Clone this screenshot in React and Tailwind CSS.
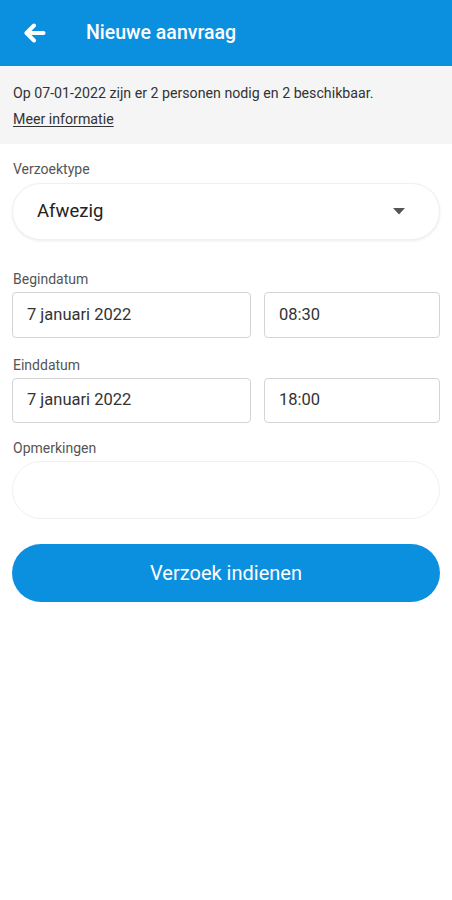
export default function App() {
  return (
    <div className="min-h-[900px] bg-white font-['Roboto',sans-serif]">
      {/* Header */}
      <div className="flex h-[66px] items-center bg-[#0b90e0] text-white">
        <div className="flex w-[86px] items-center pl-[24px]">
          <svg width="22" height="20" viewBox="0 0 22 20" fill="none">
            <path d="M10 2.5 L2.5 10 L10 17.5" stroke="white" strokeWidth="4" strokeLinecap="round" strokeLinejoin="round" />
            <path d="M3 10 H19.5" stroke="white" strokeWidth="4" strokeLinecap="round" />
          </svg>
        </div>
        <h1 className="text-[19.5px] font-medium">Nieuwe aanvraag</h1>
      </div>

      {/* Info */}
      <div className="bg-[#f5f5f5] px-[13px] pt-[18px] pb-[16px] text-[14.2px] text-[#333]">
        <p className="leading-[18px]">Op 07-01-2022 zijn er 2 personen nodig en 2 beschikbaar.</p>
        <p className="mt-[8px] leading-[18px] underline underline-offset-2">Meer informatie</p>
      </div>

      <div className="px-[12px] pt-[17px]">
        {/* Verzoektype */}
        <label className="block pl-[1px] text-[14px] leading-[16px] text-[#555]">Verzoektype</label>
        <div className="mt-[6px] flex h-[57px] items-center justify-between rounded-full border border-[#f0f0f0] bg-white px-[24px] shadow-[0_1px_3px_rgba(0,0,0,0.08)]">
          <span className="text-[18.5px] text-[#222]">Afwezig</span>
          <svg width="12" height="7" viewBox="0 0 12 7" className="mr-[10px]">
            <path d="M0 0 H12 L6 6.5 Z" fill="#555" />
          </svg>
        </div>

        {/* Begindatum */}
        <label className="mt-[31px] block pl-[1px] text-[14px] leading-[16px] text-[#555]">Begindatum</label>
        <div className="mt-[5px] flex gap-[13px]">
          <div className="flex h-[46px] w-[239px] items-center rounded-[4px] border border-[#d4d4d4] px-[14px] text-[16.5px] text-[#333]">7 januari 2022</div>
          <div className="flex h-[46px] flex-1 items-center rounded-[4px] border border-[#d4d4d4] px-[14px] text-[16.5px] text-[#333]">08:30</div>
        </div>

        {/* Einddatum */}
        <label className="mt-[19px] block pl-[1px] text-[14px] leading-[16px] text-[#555]">Einddatum</label>
        <div className="mt-[5px] flex gap-[13px]">
          <div className="flex h-[45px] w-[239px] items-center rounded-[4px] border border-[#d4d4d4] px-[14px] text-[16.5px] text-[#333]">7 januari 2022</div>
          <div className="flex h-[45px] flex-1 items-center rounded-[4px] border border-[#d4d4d4] px-[14px] text-[16.5px] text-[#333]">18:00</div>
        </div>

        {/* Opmerkingen */}
        <label className="mt-[17px] block pl-[1px] text-[14px] leading-[16px] text-[#555]">Opmerkingen</label>
        <div className="mt-[5px] h-[58px] rounded-full border border-[#f0f0f0] bg-white" />

        <button className="mt-[25px] flex h-[58px] w-full items-center justify-center rounded-full bg-[#0b90e0] text-[20px] text-white">
          Verzoek indienen
        </button>
      </div>
    </div>
  );
}
